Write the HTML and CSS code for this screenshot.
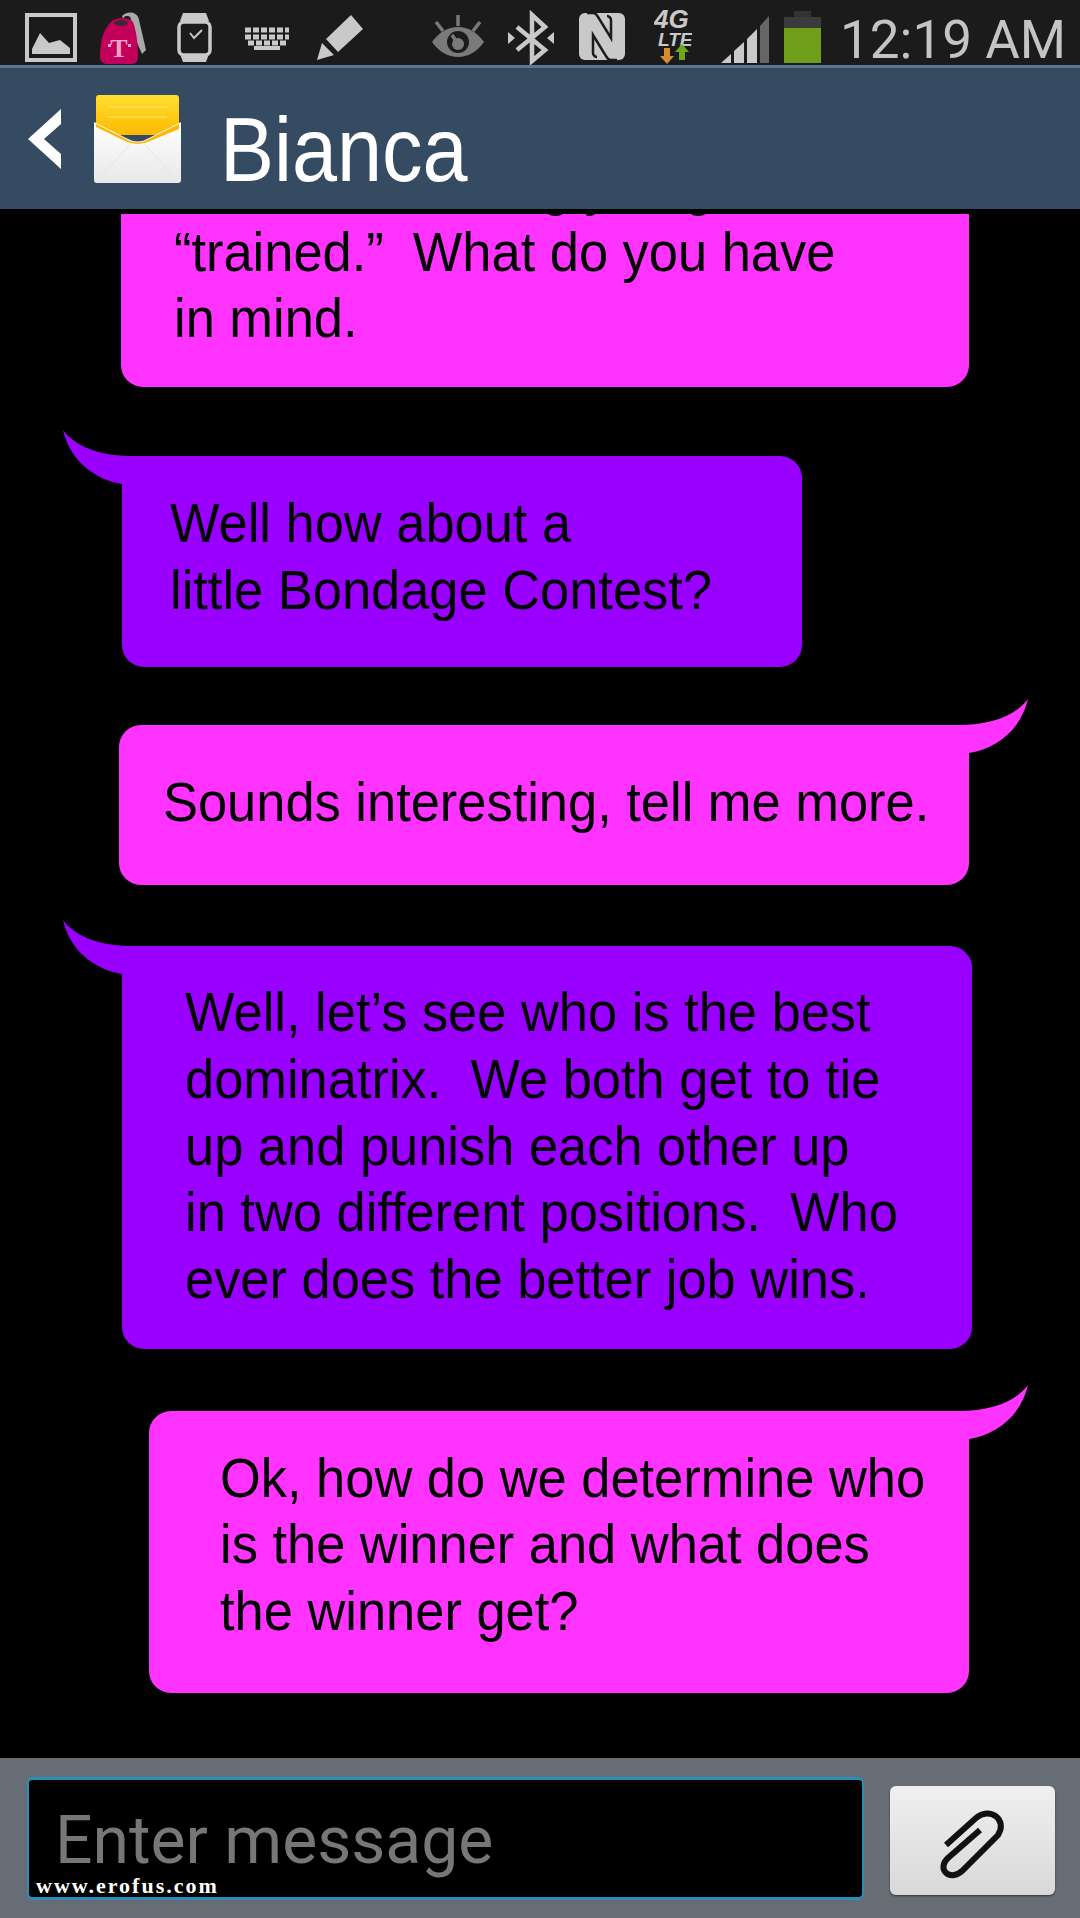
FILE: index.html
```html
<!DOCTYPE html>
<html>
<head>
<meta charset="utf-8">
<link rel="stylesheet" href="styles.css">
<title>Bianca</title>
</head>
<body>

<div class="status">
  <svg class="ic ic-photo" viewBox="0 0 52 65"><rect x="2" y="15" width="48" height="45" fill="none" stroke="#c9c9c9" stroke-width="4"/><path d="M7 54V49L15 33L24 43L35 40L45 48V54Z" fill="#c9c9c9"/></svg>
  <svg class="ic ic-tag" viewBox="0 0 46 65"><path d="M22 16C28 10 38 12 39 20L46 50L42 54L34 36L26 28Z" fill="#a9a9a9"/><circle cx="27" cy="20" r="4" fill="#1b1b1b"/><path d="M12 21C18 17 28 17 33 22C37 32 38 48 38 57C38 61 36 64 32 64H7C3 64 0 61 0 57C0 44 2 30 12 21Z" fill="#c2005c"/><ellipse cx="21" cy="23" rx="7" ry="3" fill="#3c2a30"/><text x="19" y="57" class="tag-t">T</text><rect x="8" y="44" width="3" height="3" fill="#f0a5c8"/><rect x="28" y="44" width="3" height="3" fill="#f0a5c8"/></svg>
  <svg class="ic ic-watch" viewBox="0 0 35 65"><path d="M6 13H29L32 21H3Z M3 54H32L29 62H6Z" fill="#c9c9c9"/><rect x="2" y="22" width="31" height="33" rx="5" fill="none" stroke="#c9c9c9" stroke-width="3.5"/><path d="M13 33L17 38L25 30" fill="none" stroke="#c9c9c9" stroke-width="2"/></svg>
  <svg class="ic ic-keys" viewBox="0 0 44 65"><path d="M0 30H44 M0 37H44 M3 43H41" fill="none" stroke="#c9c9c9" stroke-width="5" stroke-dasharray="6 2"/><rect x="9" y="46" width="26" height="4" fill="#c9c9c9"/></svg>
  <svg class="ic ic-pen" viewBox="0 0 46 65"><path d="M34 15L46 29L21 52L9 39Z M5 43L17 55L0 60Z" fill="#c9c9c9"/></svg>
  <svg class="ic ic-eye" viewBox="0 0 52 65"><path d="M0 42C14 22 38 22 52 42C38 62 14 62 0 42Z" fill="#7a7a7a"/><circle cx="26" cy="42" r="11" fill="#1b1b1b"/><circle cx="26" cy="44" r="6" fill="#7a7a7a"/><path d="M26 15V26 M4 22L11 31 M48 22L41 31 M20 35L26 44" stroke="#7a7a7a" stroke-width="3.5" fill="none"/></svg>
  <svg class="ic ic-bt" viewBox="0 0 46 65"><path d="M9 27L37 50L24 61V15L37 27L9 50" fill="none" stroke="#c9c9c9" stroke-width="4.5"/><path d="M0 32L7 38L0 44Z M46 32L39 38L46 44Z" fill="#c9c9c9"/></svg>
  <svg class="ic ic-nfc" viewBox="0 0 46 65"><rect x="0" y="13" width="46" height="47" rx="6" fill="#c9c9c9"/><path d="M8 13H14C16 13 18 15 19 17L32 38V20C32 18 30 16 28 16 M38 60H32C30 60 28 58 27 56L14 35V53C14 55 16 57 18 57" fill="none" stroke="#1b1b1b" stroke-width="2.5"/></svg>
  <svg class="ic ic-lte" viewBox="0 0 38 65"><text x="0" y="28" class="lte-big">4G</text><text x="4" y="46" class="lte-small">LTE</text><path d="M10 48H16V56H20L13 64L6 56H10Z" fill="#d98a35"/><path d="M25 60V52H21L28 44L35 52H31V60Z" fill="#6fa51f"/></svg>
  <svg class="ic ic-signal" viewBox="0 0 48 65"><path d="M0 63L10 54V63Z M13 51L23 42V63H13Z M26 39L36 29V63H26Z" fill="#c9c9c9"/><path d="M39 26L48 16V63H39Z" fill="#666"/></svg>
  <svg class="ic ic-batt" viewBox="0 0 37 65"><rect x="10" y="11" width="17" height="6" fill="#333"/><rect x="0" y="17" width="37" height="11" fill="#3b3b3b"/><rect x="0" y="28" width="37" height="35" fill="#6f9f1a"/></svg>
  <span class="clock">12:19 AM</span>
</div>

<div class="header">
  <svg class="back" viewBox="0 0 33 60"><path d="M33 0V15L16 30L33 45V60L0 30Z" fill="#fff"/></svg>
  <svg class="envelope" viewBox="0 0 87 88">
    <defs>
      <linearGradient id="flap" x1="0" y1="0" x2="0" y2="1"><stop offset="0" stop-color="#ffdf33"/><stop offset="1" stop-color="#fdb900"/></linearGradient>
      <linearGradient id="paper" x1="0" y1="0" x2="0" y2="1"><stop offset="0" stop-color="#fff"/><stop offset="1" stop-color="#e8e8e8"/></linearGradient>
    </defs>
    <path d="M2 3Q2 0 5 0H82Q85 0 85 3V40H2Z" fill="url(#flap)"/>
    <path d="M0 27L32 43Q44 50 55 43L87 27V85Q87 88 84 88H3Q0 88 0 85Z" fill="url(#paper)"/>
    <path d="M2 29L34 45Q44 50 53 45L85 29V34L56 46Q44 52 31 46L2 32Z" fill="#fdb900"/>
    <path d="M8 80L36 50M79 80L51 50" stroke="#e4e4e4" stroke-width="1" fill="none"/>
    <path d="M14 12H73M14 22H73" stroke="#ffe96b" stroke-width="1" fill="none"/>
  </svg>
  <span class="title">Bianca</span>
</div>

<div class="thread">
  <div class="bubble out first">
    <p>Sure beats being you get<br>“trained.”&nbsp; What do you have<br>in mind.</p>
  </div>

  <div class="bubble in short">
    <svg class="tail" viewBox="0 0 70 54"><path d="M0 0C12 16 35 26 70 26V54H59C35 50 8 34 0 0Z"/></svg>
    <p>Well how about a<br>little Bondage Contest?</p>
  </div>

  <div class="bubble out wide">
    <svg class="tail" viewBox="0 0 70 54"><path d="M0 0C12 16 35 26 70 26V54H59C35 50 8 34 0 0Z"/></svg>
    <p>Sounds interesting, tell me more.</p>
  </div>

  <div class="bubble in long">
    <svg class="tail" viewBox="0 0 70 54"><path d="M0 0C12 16 35 26 70 26V54H59C35 50 8 34 0 0Z"/></svg>
    <p>Well, let’s see who is the best<br>dominatrix.&nbsp; We both get to tie<br>up and punish each other up<br>in two different positions.&nbsp; Who<br>ever does the better job wins.</p>
  </div>

  <div class="bubble out last">
    <svg class="tail" viewBox="0 0 70 54"><path d="M0 0C12 16 35 26 70 26V54H59C35 50 8 34 0 0Z"/></svg>
    <p>Ok, how do we determine who<br>is the winner and what does<br>the winner get?</p>
  </div>
</div>

<div class="composer">
  <div class="input">
    <span class="placeholder">Enter message</span>
    <span class="mark">www.erofus.com</span>
  </div>
  <div class="attach">
    <svg class="clip" viewBox="0 0 165 109"><path d="M56 59L86 32C100 20 118 34 108 49L72 85C60 96 46 83 58 72L90 44" fill="none" stroke="#111" stroke-width="6"/></svg>
  </div>
</div>

</body>
</html>
```

FILE: styles.css
```css
html, body
{
  margin: 0;
  height: 1918px;
  overflow: hidden;
  background: #000;
}
body
{
  display: flex;
  flex-direction: column;
  font-family: "Liberation Sans", Arial, sans-serif;
}

/* status bar */
.status
{
  display: flex;
  flex: none;
  height: 65px;
  padding-left: 25px;
  background: #1b1b1b;
}
.ic { display: block; flex: none; height: 65px; }
.ic-photo { width: 52px; }
.ic-tag { width: 46px; margin-left: 23px; }
.ic-watch { width: 35px; margin-left: 31px; }
.ic-keys { width: 44px; margin-left: 33px; }
.ic-pen { width: 46px; margin-left: 28px; }
.ic-eye { width: 52px; margin-left: 69px; }
.ic-bt { width: 46px; margin-left: 24px; }
.ic-nfc { width: 46px; margin-left: 25px; }
.ic-lte { width: 38px; margin-left: 29px; }
.ic-signal { width: 48px; margin-left: 29px; }
.ic-batt { width: 37px; margin-left: 15px; }
.tag-t { font: bold 26px "Liberation Serif", serif; fill: #f0a5c8; text-anchor: middle; }
.lte-big { font: italic bold 26px "Liberation Sans", sans-serif; fill: #c9c9c9; }
.lte-small { font: italic bold 19px "Liberation Sans", sans-serif; fill: #c9c9c9; }
.clock
{
  margin-left: 19px;
  font: 400 53px/80px Roboto, sans-serif;
  color: #c4c4c4;
  white-space: nowrap;
}

/* title bar */
.header
{
  display: flex;
  flex: none;
  align-items: center;
  box-sizing: border-box;
  height: 144px;
  padding-left: 28px;
  border-top: 3px solid #5b7893;
  background: #354b61;
}
.back { width: 33px; height: 60px; }
.envelope { width: 87px; height: 88px; margin-left: 33px; }
.title
{
  margin: 22px 0 0 39px;
  font: 90px/1 "Liberation Sans", sans-serif;
  color: #fff;
  transform: scaleX(0.9);
  transform-origin: left center;
}

/* messages */
.thread
{
  flex: 1;
  min-height: 0;
  margin-top: 5px;
  overflow: hidden;
}
.bubble
{
  position: relative;
  box-sizing: border-box;
  font-size: 55px;
  line-height: 66.7px;
  color: #000;
}
.bubble p
{
  margin: 0;
  white-space: nowrap;
  transform: scaleX(0.953);
  transform-origin: left center;
}
.in { background: #9900ff; fill: #9900ff; margin-left: 122px; border-radius: 0 22px 22px 22px; }
.out { background: #ff33ff; fill: #ff33ff; border-radius: 22px 0 22px 22px; }
.tail { position: absolute; top: -26px; width: 70px; height: 54px; }
.in .tail { left: -59px; }
.out .tail { right: -59px; transform: scaleX(-1); }

.first
{
  width: 848px;
  margin-left: 121px;
  margin-top: -62px;
  padding: 0 0 35px 53px;
  border-radius: 0 0 22px 22px;
}
.short { width: 680px; margin-top: 69px; padding: 34px 0 43px 48px; }
.wide { width: 850px; margin-left: 119px; margin-top: 58px; padding: 44px 0 50px 44px; }
.long { width: 850px; margin-top: 61px; padding: 33px 0 36px 63px; }
.last { width: 820px; margin-left: 149px; margin-top: 62px; padding: 34px 0 48px 71px; }

/* bottom input */
.composer
{
  display: flex;
  flex: none;
  align-items: flex-start;
  box-sizing: border-box;
  height: 160px;
  padding: 19px 25px 0 27px;
  background: #676d75;
}
.input
{
  position: relative;
  box-sizing: border-box;
  width: 837px;
  height: 123px;
  padding-left: 26px;
  border: 2px solid #2a8fb8;
  border-top-width: 3px;
  border-bottom-width: 3px;
  border-radius: 6px;
  background: #000;
}
.placeholder
{
  font: 66px/122px Roboto, sans-serif;
  color: #777;
}
.mark
{
  position: absolute;
  left: 7px;
  bottom: -1px;
  font: bold 22px/24px "Liberation Serif", serif;
  letter-spacing: 2px;
  color: #fff;
}
.attach
{
  width: 165px;
  height: 109px;
  margin: 9px 0 0 26px;
  border-radius: 6px;
  background: linear-gradient(#f0f0f0, #d8d8d8);
  box-shadow: 0 1px 2px #333;
}
.clip { display: block; width: 165px; height: 109px; }
```
